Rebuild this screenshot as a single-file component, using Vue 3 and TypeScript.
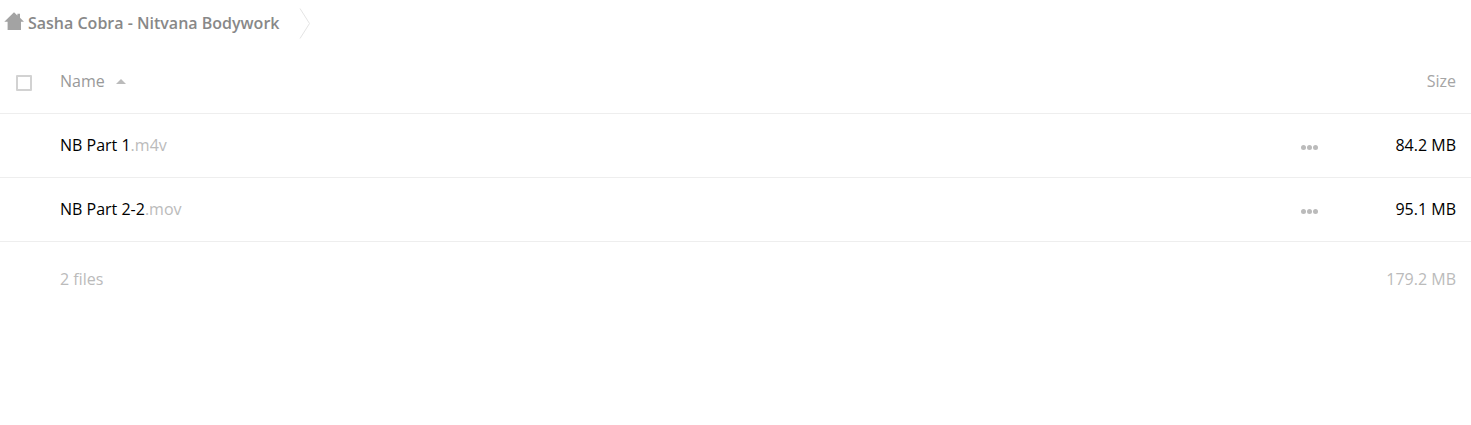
<script setup lang="ts">
interface FileRow {
  base: string;
  ext: string;
  size: string;
}

const files: FileRow[] = [
  { base: 'NB Part 1', ext: '.m4v', size: '84.2 MB' },
  { base: 'NB Part 2-2', ext: '.mov', size: '95.1 MB' },
];
</script>

<template>
  <div class="page">
    <nav class="crumbs">
      <svg class="home" width="20" height="18" viewBox="0 0 20 18">
        <path d="M10 0.3 L13.4 3.4 V1.8 H16 V5.8 L20 9.8 H17 V18 H3.6 V9.8 H0.3 Z" fill="#a3a3a3" />
      </svg>
      <span class="crumb-title">Sasha Cobra - Nitvana Bodywork</span>
      <svg class="chevron" width="12" height="32" viewBox="0 0 12 32">
        <path d="M1 0.5 L10.5 15.5 L1 30.5" fill="none" stroke="#e4e4e4" stroke-width="1" />
      </svg>
    </nav>

    <div class="row head">
      <div class="check-col"><span class="checkbox"></span></div>
      <div class="name-col">
        Name<span class="sort"></span>
      </div>
      <div class="size-col">Size</div>
    </div>

    <div v-for="f in files" :key="f.base" class="row file">
      <div class="check-col"></div>
      <div class="name-col">{{ f.base }}<span class="ext">{{ f.ext }}</span></div>
      <div class="more"><i></i><i></i><i></i></div>
      <div class="size-col">{{ f.size }}</div>
    </div>

    <div class="summary">
      <div class="check-col"></div>
      <div class="name-col">2 files</div>
      <div class="size-col">179.2 MB</div>
    </div>
  </div>
</template>

<style>
body { background: #fff; }
</style>

<style scoped>
.page {
  font-family: "Open Sans", sans-serif;
  font-size: 16px;
  line-height: 22px;
  color: #000;
  height: 425px;
  overflow: hidden;
}

.crumbs {
  display: flex;
  align-items: center;
  height: 50px;
  padding-left: 4px;
  box-sizing: border-box;
  padding-bottom: 5px;
}
.home { flex: none; margin-top: -3px; }
.crumb-title {
  margin-left: 4px;
  font-weight: 600;
  color: #888;
}
.chevron { margin-left: 20px; margin-top: 3px; }

.row, .summary {
  display: flex;
  align-items: center;
}
.row {
  height: 64px;
  border-bottom: 1px solid #eee;
  box-sizing: border-box;
  padding-bottom: 1px;
}
.head { color: #999; }
.check-col { width: 60px; flex: none; display: flex; padding-left: 16px; box-sizing: border-box; }
.name-col { flex: 1; }
.size-col { width: 153px; flex: none; text-align: right; padding-right: 15px; box-sizing: border-box; }
.head .size-col { color: #a5a5a5; }

.checkbox {
  width: 12px;
  height: 12px;
  border: 2px solid #d2d2d2;
  border-radius: 1px;
  margin-top: 3px;
}
.sort {
  display: inline-block;
  width: 0;
  height: 0;
  margin-left: 11px;
  vertical-align: 3px;
  border-left: 5px solid transparent;
  border-right: 5px solid transparent;
  border-bottom: 5px solid #bbb;
}

.ext { color: #bbb; }
.more {
  display: flex;
  gap: 1px;
  flex: none;
  margin-top: 4px;
}
.more i {
  width: 5px;
  height: 5px;
  border-radius: 50%;
  background: #bbb;
}

.summary {
  height: 74px;
  color: #bbb;
  box-sizing: border-box;
}
</style>
